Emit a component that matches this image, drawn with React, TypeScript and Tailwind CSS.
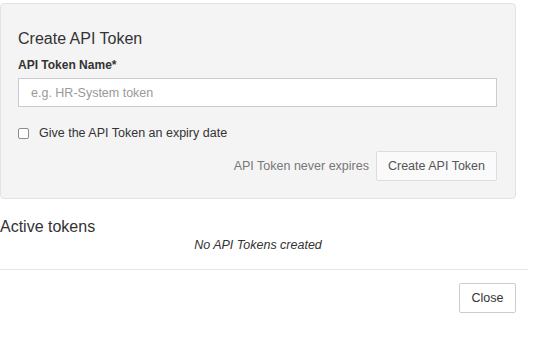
export default function App() {
  return (
    <div className="w-[534px] h-[342px] overflow-hidden bg-white font-['Liberation_Sans',Arial,sans-serif] text-[#333]">
      <div className="pt-[3px]">
        {/* create token panel */}
        <div className="w-[516px] h-[196px] rounded-[4px] border border-[#e3e3e3] bg-[#f4f4f4] pl-[17px] pr-[18px] pt-[25px]">
          <h4 className="text-[16px] leading-[20px] text-[#333]">Create API Token</h4>
          <label className="block mt-[8px] text-[12px] leading-[16px] font-bold text-[#333]">API Token Name*</label>
          <input
            type="text"
            placeholder="e.g. HR-System token"
            className="mt-[5px] block w-[479px] h-[29px] border border-[#ccc] bg-white px-[12px] text-[12.5px] text-[#333] outline-none placeholder:text-[#999]"
          />
          <div className="mt-[18px] flex items-center gap-[10px] h-[16px]">
            <input
              type="checkbox"
              className="appearance-none w-[11px] h-[11px] border border-[#8c8c8c] rounded-[2px] bg-white"
            />
            <span className="text-[12.5px] leading-[16px] text-[#333]">Give the API Token an expiry date</span>
          </div>
          <div className="mt-[10px] flex items-center justify-end gap-[7px]">
            <span className="text-[12.5px] text-[#777]">API Token never expires</span>
            <button className="h-[30px] px-[11px] border border-[#ddd] rounded-[2px] bg-[#fafafa] text-[12.5px] text-[#555]">
              Create API Token
            </button>
          </div>
        </div>
      </div>

      {/* active tokens */}
      <div className="w-[516px] mt-[18px]">
        <h4 className="text-[16px] leading-[20px] text-[#333]">Active tokens</h4>
        <p className="text-center italic text-[12.5px] leading-[16px] text-[#333]">No API Tokens created</p>
      </div>

      <div className="mt-[16px] w-[528px] border-t border-[#e5e5e5]" />
      <div className="w-[516px] mt-[13px] flex justify-end">
        <button className="h-[30px] w-[57px] border border-[#ccc] rounded-[2px] bg-white text-[12.5px] text-[#333]">
          Close
        </button>
      </div>
    </div>
  );
}
